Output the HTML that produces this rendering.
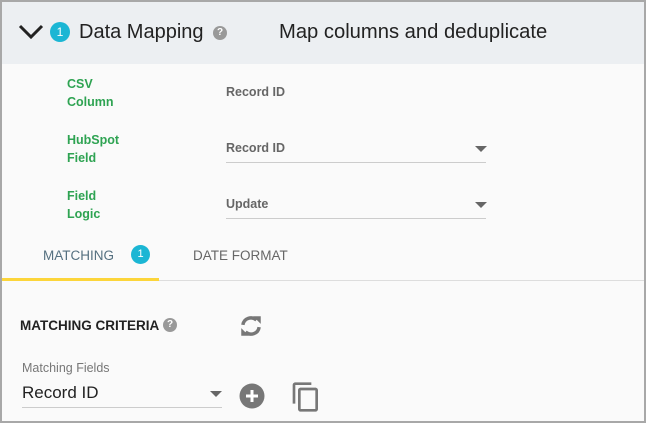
<!DOCTYPE html><html><head><style>
body{margin:0;width:646px;height:423px;overflow:hidden;font-family:"Liberation Sans",sans-serif;}
.wrap{position:absolute;left:0;top:0;width:642px;height:419px;border:2px solid #a8a8a8;background:#fafafa;}
.abs{position:absolute;white-space:nowrap;}
.hdr{position:absolute;left:0;top:0;width:642px;height:62px;background:#eceff2;}
.g{color:#2ea352;font-weight:bold;font-size:12.5px;line-height:18px;}
.v{color:#666;font-weight:bold;font-size:12.5px;}
.line{position:absolute;height:1px;background:#ccc;}
.arr{position:absolute;width:0;height:0;border-left:6px solid transparent;border-right:6px solid transparent;border-top:6px solid #666;}
.q{position:absolute;border-radius:50%;background:#999;color:#fff;font-weight:bold;text-align:center;}
</style></head><body><div class="wrap">
<div class="hdr"></div>
<svg class="abs" style="left:15px;top:19px" width="28" height="20"><path d="M3 5 L14 16 L25 5" stroke="#222" stroke-width="3" fill="none"/></svg>
<div class="abs" style="left:48px;top:20px;width:20px;height:20px;border-radius:50%;background:#1bb6d4;color:#fff;font-size:12px;text-align:center;line-height:20px">1</div>
<div class="abs" style="left:77px;top:19px;font-size:20px;color:#222">Data Mapping</div>
<div class="q" style="left:211px;top:24px;width:14px;height:14px;font-size:10px;line-height:14px">?</div>
<div class="abs" style="left:277px;top:19px;font-size:20.2px;color:#222">Map columns and deduplicate</div>
<div class="abs g" style="left:65px;top:73px">CSV<br>Column</div>
<div class="abs v" style="left:224px;top:83px">Record ID</div>
<div class="abs g" style="left:65px;top:129px">HubSpot<br>Field</div>
<div class="abs v" style="left:224px;top:139px">Record ID</div>
<div class="line" style="left:224px;top:160px;width:260px"></div>
<div class="arr" style="left:473px;top:144px"></div>
<div class="abs g" style="left:65px;top:185px">Field<br>Logic</div>
<div class="abs v" style="left:224px;top:195px">Update</div>
<div class="line" style="left:224px;top:216px;width:260px"></div>
<div class="arr" style="left:473px;top:200px"></div>
<div class="abs" style="left:41px;top:246px;font-size:13.5px;color:#557080">MATCHING</div>
<div class="abs" style="left:129px;top:243px;width:19px;height:19px;border-radius:50%;background:#1bb6d4;color:#fff;font-size:11px;text-align:center;line-height:19px">1</div>
<div class="abs" style="left:191px;top:246px;font-size:13.5px;color:#666">DATE FORMAT</div>
<div class="line" style="left:0;top:278px;width:642px;background:#ddd"></div>
<div class="abs" style="left:0;top:276px;width:157px;height:3px;background:#fcd53a"></div>
<div class="abs" style="left:18px;top:316px;font-size:13.5px;font-weight:bold;color:#222">MATCHING CRITERIA</div>
<div class="q" style="left:161px;top:316px;width:14px;height:14px;font-size:10px;line-height:14px">?</div>
<svg class="abs" style="left:236px;top:310px" width="26" height="28" viewBox="0 0 24 24"><g fill="none" stroke="#777" stroke-width="3.2"><path d="M4.5 11 A7.5 7.5 0 0 1 17 6.5"/><path d="M19.5 13 A7.5 7.5 0 0 1 7 17.5"/></g><path fill="#777" d="M14 3h7v7z M10 21H3v-7z"/></svg>
<div class="abs" style="left:20px;top:359px;font-size:12.5px;color:#777">Matching Fields</div>
<div class="abs" style="left:20px;top:381px;font-size:17px;color:#222">Record ID</div>
<div class="line" style="left:20px;top:405px;width:200px;background:#ccc"></div>
<div class="arr" style="left:208px;top:389px"></div>
<svg class="abs" style="left:237px;top:380px" width="28" height="28" viewBox="0 0 28 28"><circle cx="13" cy="14" r="12.5" fill="#777"/><path d="M13 8v12M7 14h12" stroke="#fff" stroke-width="3"/></svg>
<svg class="abs" style="left:288px;top:378px" width="32" height="34" viewBox="0 0 24 24"><path fill="#777" d="M16 1H4c-1.1 0-2 .9-2 2v14h2V3h12V1zm3 4H8c-1.1 0-2 .9-2 2v14c0 1.1.9 2 2 2h11c1.1 0 2-.9 2-2V7c0-1.1-.9-2-2-2zm0 16H8V7h11v14z"/></svg>
</div></body></html>
